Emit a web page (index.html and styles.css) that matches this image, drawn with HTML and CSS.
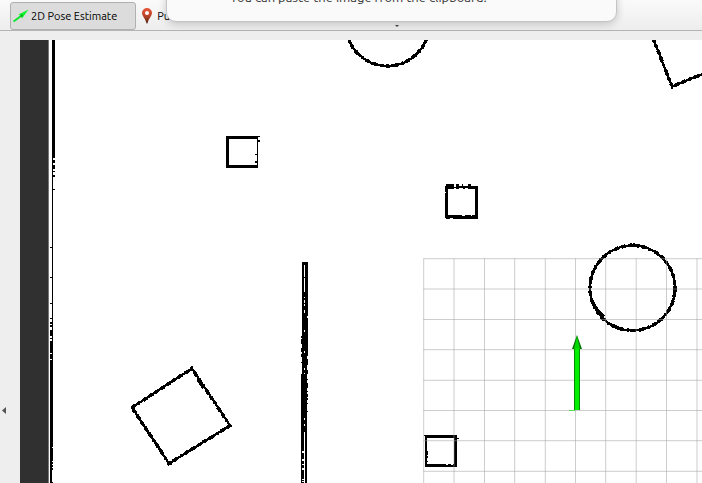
FILE: index.html
```html
<!DOCTYPE html>
<html lang="en">
<head>
<meta charset="utf-8">
<title>Map view</title>
<link rel="stylesheet" href="styles.css">
</head>
<body>
<header class="toolbar">
  <button class="tool tool-active" type="button">
    <svg class="icon" viewBox="0 0 16 16" aria-hidden="true"><path d="M.5 13.5 8 8" stroke="#0fe42c" stroke-width="2"/><path d="M5.500 6.500 15.500 1.500 9 10.500 8 8z" fill="#0df52a"/><path d="m7 7 3-.5-1 3z" fill="#08a91c"/></svg>
    2D Pose Estimate
  </button>
  <button class="tool" type="button">
    <svg class="icon" viewBox="0 0 16 16" aria-hidden="true"><defs><linearGradient id="pin" x2="0" y2="1"><stop stop-color="#e8573a"/><stop offset=".5" stop-color="#b94428"/><stop offset="1" stop-color="#43240f"/></linearGradient></defs><path d="M8 0a5 5 0 0 0-5 5c0 3 3 5 4 9l1 2 1-2c1-4 4-6 4-9a5 5 0 0 0-5-5z" fill="url(#pin)"/><circle cx="8" cy="5" r="2" fill="#fff"/></svg>
    Publish Point
  </button>
  <button class="collapse-top" type="button" aria-label="Collapse toolbar"><svg viewBox="0 0 4 2"><path d="M0 0h4L2 2z" fill="#444"/></svg></button>
</header>
<main class="workspace">
  <div class="splitter">
    <button class="collapse-side" type="button" aria-label="Collapse panel"><svg viewBox="0 0 4 7"><path d="M0 3.500 4 0v7z" fill="#555"/></svg></button>
  </div>
  <section class="viewport" aria-label="Map">
    <svg class="map" shape-rendering="crispEdges">
      <g transform="translate(-20 -40)">
        <path d="M20 40h28v2000h-28z" fill="#303030"/>
        <path d="M48 40h1v2000h-1z" fill="#777"/>
        <!-- left wall -->
        <path d="M52 40h3v118h-3zM53 160h2v3h-2zM53 165h2v4h-2zM53 171h2v1h-2zM53 175h2v2h-2zM53 189h2v1h-2zM52 158h1v289h-1zM50 247h2v1h-2zM50 277h2v1h-2zM50 303h2v1h-2zM50 318h2v1h-2zM50 322h2v2h-2zM50 325h2v2h-2zM50 330h2v6h-2zM50 338h2v1h-2zM50 341h2v12h-2zM50 354h2v5h-2zM50 360h2v2000h-2zM52 448h1v13h-1zM52 462h1v2h-1zM52 465h1v2h-1zM52 468h1v2h-1zM52 482h1v2000h-1z"/>
        <!-- centre wall -->
        <path d="M302 262h6v88h-6zM301 336h6v2000h-6zM307 346h1v1h-1zM307 348h1v8h-1zM307 359h1v6h-1zM307 370h1v4h-1zM307 379h1v1h-1zM307 383h1v5h-1zM307 391h1v1h-1zM307 394h1v3h-1zM307 398h1v2h-1zM307 403h1v1h-1zM307 411h1v1h-1z"/>
        <path d="M304 265h1v12h-1zM304 278h1v14h-1zM304 297h1v1h-1zM304 300h1v3h-1zM304 304h1v2h-1zM304 310h1v3h-1zM307 316h1v2h-1zM304 330h1v2h-1zM301 338h1v1h-1zM301 344h1v4h-1zM304 351h1v2h-1zM301 352h1v2h-1zM301 357h1v5h-1zM301 363h1v11h-1zM304 368h1v2h-1zM304 373h1v1h-1zM304 418h1v2h-1zM304 424h1v2h-1zM304 432h1v2000h-1zM302 451h2v2h-2zM302 459h2v2h-2zM302 464h2v1h-2zM302 468h2v2h-2zM302 479h2v1h-2zM302 481h2v1h-2z" fill="#fff"/>
        <!-- boxes -->
        <path fill-rule="evenodd" d="M226 136h32v32h-32zM229 139v26h28v-26z"/>
        <path d="M258 136h2v1h-2zM258 140h2v2h-2zM255 154h2v1h-2zM255 161h2v2h-2z"/>
        <path fill-rule="evenodd" d="M445 186h33v32h-33zM448 188v27h27v-27z"/>
        <path d="M446 184h8v5h-8zM456 184h3v5h-3zM462 184h1v3h-1zM463 187h2v2h-2zM468 184h3v5h-3zM471 187h4v2h-4zM446 218h4v1h-4zM453 218h25v1h-25z"/>
        <path d="M445 192h1v1h-1zM454 186h2v1h-2zM462 215h3v1h-3zM471 215h1v1h-1z" fill="#fff"/>
        <path fill-rule="evenodd" d="M425 435h32v32h-32zM427 438v26h27v-26z"/>
        <path d="M424 435h2v1h-2zM457 438h2v1h-2zM427 451h1v4h-1zM427 456h1v2h-1zM427 461h1v1h-1z"/>
        <path d="M446 464h2v1h-2zM451 464h2v1h-2z" fill="#fff"/>
        <!-- rotated boxes and pillars, with the scan noise on their edges -->
        <defs>
          <g id="outlines">
            <path d="M132 407.500 192 368.500 230 425.500 169 463.500z"/>
            <path d="M653 38 672 86.500 704 73.500"/>
            <circle cx="632.500" cy="288" r="42.500"/>
            <circle cx="387.500" cy="24.500" r="41.500"/>
          </g>
        </defs>
        <g fill="none" stroke="#000">
          <use href="#outlines" stroke-width="2.400"/>
          <use href="#outlines" stroke-width="3.600" stroke-dasharray="4 3 2 4 5 3"/>
          <path d="M591 299Q596 311 604 317M612 325 620 329M198 379 204 388" stroke-width="3.600"/>
        </g>
        <path d="M191 366h2v3h-2zM167 462h5v3h-5zM131 406h3v3h-3zM228 424h3v3h-3zM671 85h2v4h-2zM630 243h2v3h-2zM633 243h2v3h-2zM689 77h5v2h-5z"/>
        <!-- ground grid -->
        <g shape-rendering="auto" fill="none" stroke="#a0a0a0" stroke-opacity=".52">
          <path d="M423.700 258.500V2000M454 258.500V2000M484.500 258.500V2000M514.700 258.500V2000M545.300 258.500V2000M575.500 258.500V2000M605.700 258.500V2000M636.200 258.500V2000M666.500 258.500V2000M697 258.500V2000"/>
          <path d="M423.500 258.700H3000M423.500 289H3000M423.500 319.500H3000M423.500 349.700H3000M423.500 380.300H3000M423.500 410.500H3000M423.500 440.700H3000M423.500 471.300H3000"/>
        </g>
        <!-- pose arrow -->
        <g shape-rendering="auto">
          <path d="M569 410h6v1h-6z" fill="#4de04d"/>
          <path d="M574 348h6v62h-6z" fill="#058a05"/>
          <path d="M575 348h4v62h-4z" fill="#00f000"/>
          <path d="M577 335 582 349H572z" fill="#087408"/>
          <path d="M577 336 580 349H574z" fill="#00d800"/>
        </g>
      </g>
    </svg>
  </section>
</main>
<aside class="notice" role="status">You can paste the image from the clipboard.</aside>
</body>
</html>
```
FILE: styles.css
```css
* {
  box-sizing: border-box;
}

body {
  display: flex;
  flex-direction: column;
  height: 100vh;
  margin: 0;
  overflow: hidden;
  background: #eee;
  color: #1a1a1a;
  font: 11px/16px "Ubuntu", "Open Sans", sans-serif;
}

button {
  margin: 0;
  padding: 0;
  border: 0;
  background: none;
  color: inherit;
  font: inherit;
}

.toolbar {
  position: relative;
  display: flex;
  padding: 2px 10px 0;
  border-bottom: 1px solid #b4b4b4;
  background: linear-gradient(#fafafa, #ededed);
}

.tool {
  display: flex;
  align-items: center;
  gap: 2px;
  height: 28px;
  padding: 0 18px 0 2px;
  border: 1px solid transparent;
  border-radius: 3px;
  color: #000;
  white-space: nowrap;
}

.tool-active {
  border-color: #b0b0b0;
  background: #dcdcdc;
}

.icon {
  width: 16px;
  height: 16px;
}

.collapse-top {
  position: absolute;
  bottom: 3px;
  left: calc(50% + 44px);
  display: flex;
}

.collapse-top svg {
  width: 4px;
  height: 2px;
}

.workspace {
  display: flex;
  flex: 1;
  min-height: 0;
}

.splitter {
  display: flex;
  flex: 0 0 20px;
  align-items: flex-start;
  padding: 376px 2px 0;
}

.collapse-side {
  display: flex;
}

.collapse-side svg {
  width: 4px;
  height: 7px;
}

.viewport {
  flex: 1;
  min-width: 0;
  margin-top: 9px;
  background: #fff;
}

.map {
  display: block;
  width: 100%;
  height: 100%;
}

.notice {
  position: absolute;
  top: -12px;
  right: 85px;
  left: 166px;
  height: 34px;
  padding-left: 63px;
  border: 1px solid #c4c4c4;
  border-radius: 10px;
  background: #fafafa;
  box-shadow: 0 2px 8px rgba(0, 0, 0, .2);
  color: #333;
  font-size: 13px;
}
```
